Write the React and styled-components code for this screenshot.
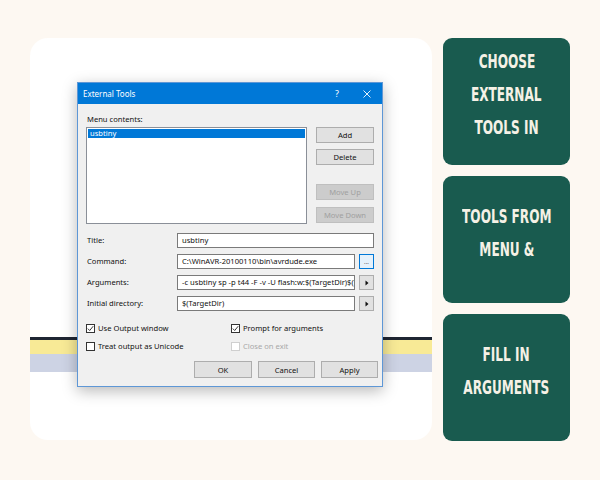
import React from 'react';
import styled, { createGlobalStyle } from 'styled-components';

const GlobalStyle = createGlobalStyle`
  html, body {
    margin: 0;
    padding: 0;
    background: #fdf8f2;
  }
  body {
    width: 600px;
    height: 480px;
    overflow: hidden;
    font-family: "Noto Sans", "DejaVu Sans", sans-serif;
  }
`;

const Page = styled.div`
  display: flex;
  gap: 11px;
  padding: 38px 0 0 30px;
  box-sizing: border-box;
  width: 600px;
  height: 480px;
`;

const Canvas = styled.div`
  width: 402px;
  height: 402px;
  border-radius: 18px;
  box-sizing: border-box;
  padding: 44px 0 0 47px;
  background: linear-gradient(
    to bottom,
    #fff 0,
    #fff 299px,
    #1f2633 299px,
    #1f2633 302px,
    #f8ea96 302px,
    #f8ea96 316px,
    #cdd3e4 316px,
    #cdd3e4 334px,
    #fff 334px
  );
`;

const Dialog = styled.div`
  width: 306px;
  box-sizing: border-box;
  border: 1px solid #5e97d6;
  background: #f0f0f0;
  box-shadow: 0 4px 14px rgba(0, 0, 0, 0.28);
  font-size: 7.6px;
  color: #111;
`;

const TitleBar = styled.div`
  height: 21px;
  background: #0078d7;
  color: #fff;
  display: flex;
  align-items: center;
  padding-left: 5px;
`;

const TitleText = styled.div`
  flex: 1;
  font-size: 8px;
`;

const TitleButton = styled.div`
  width: 30px;
  height: 21px;
  display: flex;
  align-items: center;
  justify-content: center;
  font-size: 9px;
`;

const Body = styled.div`
  padding: 10px 4px 8px 8px;
`;

const FieldLabel = styled.div`
  height: 10px;
  line-height: 10px;
  padding-left: 1px;
  white-space: nowrap;
`;

const TopRow = styled.div`
  display: flex;
  gap: 9px;
  margin-top: 3px;
`;

const ListBox = styled.div`
  width: 221px;
  height: 97px;
  box-sizing: border-box;
  border: 1px solid #8a8f98;
  background: #fff;
  padding: 1px;
`;

const ListItem = styled.div`
  height: 9px;
  line-height: 9px;
  padding-left: 2px;
  background: ${p => (p.selected ? '#0078d7' : 'transparent')};
  color: ${p => (p.selected ? '#fff' : '#111')};
`;

const SideButtons = styled.div`
  display: flex;
  flex-direction: column;
  width: 58px;
`;

const Button = styled.div`
  width: ${p => p.width || 58}px;
  height: ${p => p.height || 16}px;
  margin-top: ${p => p.gap || 0}px;
  box-sizing: border-box;
  border: 1px solid ${p => (p.disabled ? '#bfbfbf' : '#adadad')};
  background: ${p => (p.disabled ? '#cccccc' : '#e1e1e1')};
  color: ${p => (p.disabled ? '#a0a0a0' : '#111')};
  display: flex;
  align-items: center;
  justify-content: center;
  white-space: nowrap;
`;

const Form = styled.div`
  display: grid;
  grid-template-columns: 91px 197px;
  row-gap: 6px;
  margin-top: 9px;
`;

const FormLabel = styled.div`
  padding: 2px 0 0 1px;
  white-space: nowrap;
`;

const InputGroup = styled.div`
  display: flex;
  gap: 4px;
`;

const Input = styled.div`
  flex: 1;
  min-width: 0;
  height: 15px;
  box-sizing: border-box;
  border: 1px solid #7a7a7a;
  background: #fff;
  padding-left: 4px;
  line-height: 13px;
  white-space: nowrap;
  overflow: hidden;
`;

const SmallButton = styled.div`
  width: 15px;
  height: 15px;
  box-sizing: border-box;
  border: 1px solid ${p => (p.focused ? '#0078d7' : '#adadad')};
  background: ${p => (p.focused ? '#e5f1fb' : '#e1e1e1')};
  display: flex;
  align-items: center;
  justify-content: center;
  font-size: 6px;
  color: #333;
`;

const Checks = styled.div`
  display: grid;
  grid-template-columns: 145px 140px;
  row-gap: 8px;
  margin-top: 12px;
`;

const CheckItem = styled.div`
  display: flex;
  align-items: center;
  gap: 3px;
  height: 10px;
  color: ${p => (p.disabled ? '#a8a8a8' : '#111')};
  white-space: nowrap;
`;

const Box = styled.div`
  width: 9px;
  height: 9px;
  box-sizing: border-box;
  border: 1px solid ${p => (p.disabled ? '#cfcfcf' : '#333')};
  background: #fff;
  display: flex;
  align-items: center;
  justify-content: center;
`;

const Footer = styled.div`
  display: flex;
  justify-content: flex-end;
  gap: 6px;
  margin-top: 10px;
`;

const Steps = styled.div`
  display: flex;
  flex-direction: column;
  gap: 11px;
`;

const StepCard = styled.div`
  width: 127px;
  height: 127px;
  border-radius: 9px;
  background: #195b4f;
  color: #f5f1e6;
  display: flex;
  flex-direction: column;
  align-items: center;
  justify-content: center;
  padding-bottom: 14px;
  box-sizing: border-box;
`;

const StepLine = styled.div`
  height: 33px;
  line-height: 33px;
  font-family: "DejaVu Sans", sans-serif;
  font-stretch: condensed;
  font-weight: bold;
  font-size: 19.5px;
  white-space: nowrap;
  transform: scaleX(0.69);
`;

const Check = () => (
  <svg width="7" height="7" viewBox="0 0 7 7">
    <path d="M0.8 3.6 L2.7 5.5 L6.2 1.2" fill="none" stroke="#222" strokeWidth="0.9" />
  </svg>
);

const Arrow = () => (
  <svg width="4" height="6" viewBox="0 0 4 6">
    <path d="M0.5 0.5 L3.5 3 L0.5 5.5 Z" fill="#111" />
  </svg>
);

const CloseIcon = () => (
  <svg width="8" height="8" viewBox="0 0 8 8">
    <path d="M0.5 0.5 L7.5 7.5 M7.5 0.5 L0.5 7.5" stroke="#fff" strokeWidth="0.9" />
  </svg>
);

const steps = [
  ['CHOOSE', 'EXTERNAL', 'TOOLS IN'],
  ['TOOLS FROM', 'MENU &'],
  ['FILL IN', 'ARGUMENTS'],
];

export default function App() {
  return (
    <>
      <GlobalStyle />
      <Page>
        <Canvas>
          <Dialog>
            <TitleBar>
              <TitleText>External Tools</TitleText>
              <TitleButton>?</TitleButton>
              <TitleButton>
                <CloseIcon />
              </TitleButton>
            </TitleBar>
            <Body>
              <FieldLabel>Menu contents:</FieldLabel>
              <TopRow>
                <ListBox>
                  <ListItem selected>usbtiny</ListItem>
                </ListBox>
                <SideButtons>
                  <Button>Add</Button>
                  <Button gap={6}>Delete</Button>
                  <Button gap={19} disabled>Move Up</Button>
                  <Button gap={7} disabled>Move Down</Button>
                </SideButtons>
              </TopRow>
              <Form>
                <FormLabel>Title:</FormLabel>
                <InputGroup>
                  <Input>usbtiny</Input>
                </InputGroup>
                <FormLabel>Command:</FormLabel>
                <InputGroup>
                  <Input>C:\WinAVR-20100110\bin\avrdude.exe</Input>
                  <SmallButton focused>...</SmallButton>
                </InputGroup>
                <FormLabel>Arguments:</FormLabel>
                <InputGroup>
                  <Input>-c usbtiny sp -p t44 -F -v -U flash:w:$(TargetDir)$(TargetName).hex</Input>
                  <SmallButton>
                    <Arrow />
                  </SmallButton>
                </InputGroup>
                <FormLabel>Initial directory:</FormLabel>
                <InputGroup>
                  <Input>$(TargetDir)</Input>
                  <SmallButton>
                    <Arrow />
                  </SmallButton>
                </InputGroup>
              </Form>
              <Checks>
                <CheckItem>
                  <Box><Check /></Box>Use Output window
                </CheckItem>
                <CheckItem>
                  <Box><Check /></Box>Prompt for arguments
                </CheckItem>
                <CheckItem>
                  <Box />Treat output as Unicode
                </CheckItem>
                <CheckItem disabled>
                  <Box disabled />Close on exit
                </CheckItem>
              </Checks>
              <Footer>
                <Button width={58} height={17}>OK</Button>
                <Button width={57} height={17}>Cancel</Button>
                <Button width={57} height={17}>Apply</Button>
              </Footer>
            </Body>
          </Dialog>
        </Canvas>
        <Steps>
          {steps.map((lines, i) => (
            <StepCard key={i}>
              {lines.map(l => (
                <StepLine key={l}>{l}</StepLine>
              ))}
            </StepCard>
          ))}
        </Steps>
      </Page>
    </>
  );
}
